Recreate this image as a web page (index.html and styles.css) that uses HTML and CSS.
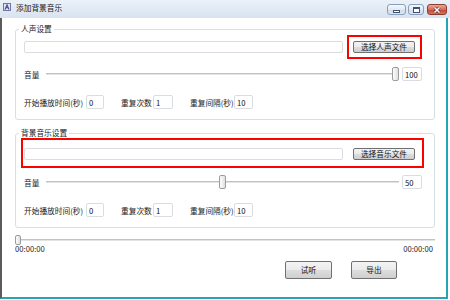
FILE: index.html
```html
<!DOCTYPE html>
<html lang="zh-CN">
<head>
    <meta charset="UTF-8">
    <title>添加背景音乐</title>
    <link rel="stylesheet" href="styles.css">
</head>
<body>
    <div class="titlebar">
        <svg class="app-icon" viewBox="0 0 8 8">
            <rect x="0.5" y="0.5" width="7" height="7" fill="#dfe4f2" stroke="#6d78a6"/>
            <path d="M2 6.5 L4 1.8 L6 6.5 M2.8 4.8 H5.2" fill="none" stroke="#5a3f8c" stroke-width="1.1"/>
        </svg>
        <span class="title">添加背景音乐</span>
        <div class="caption">
            <span class="cap min"><i></i></span>
            <span class="cap max"><i></i></span>
            <span class="cap close">
                <svg viewBox="0 0 10 8" width="10" height="8">
                    <path d="M2.5 1.5 L7.5 6.5 M7.5 1.5 L2.5 6.5" stroke="#6b2a22" stroke-width="3"/>
                    <path d="M2.5 1.5 L7.5 6.5 M7.5 1.5 L2.5 6.5" stroke="#fff" stroke-width="1.5"/>
                </svg>
            </span>
        </div>
    </div>

    <div class="frame">
        <fieldset class="group">
            <legend>人声设置</legend>
            <div class="row file">
                <input class="text path" type="text">
                <span class="mark"><button class="btn pick">选择人声文件</button></span>
            </div>
            <div class="row volume">
                <span class="vol">音量</span>
                <input class="slider" type="range" min="0" max="100" value="100">
                <input class="text val" type="text" value="100">
            </div>
            <div class="row times">
                <span class="start">开始播放时间(秒)</span><input class="text n1" type="text" value="0">
                <span class="count">重复次数</span><input class="text n2" type="text" value="1">
                <span class="gap">重复间隔(秒)</span><input class="text n3" type="text" value="10">
            </div>
        </fieldset>

        <fieldset class="group music">
            <legend>背景音乐设置</legend>
            <div class="hl">
                <div class="row file">
                    <input class="text path" type="text">
                    <button class="btn pick">选择音乐文件</button>
                </div>
            </div>
            <div class="row volume">
                <span class="vol">音量</span>
                <input class="slider" type="range" min="0" max="100" value="50">
                <input class="text val" type="text" value="50">
            </div>
            <div class="row times">
                <span class="start">开始播放时间(秒)</span><input class="text n1" type="text" value="0">
                <span class="count">重复次数</span><input class="text n2" type="text" value="1">
                <span class="gap">重复间隔(秒)</span><input class="text n3" type="text" value="10">
            </div>
        </fieldset>

        <input class="seek" type="range" min="0" max="100" value="0">
        <div class="clock"><span>00:00:00</span><span>00:00:00</span></div>
        <div class="actions">
            <button class="btn act">试听</button>
            <button class="btn act">导出</button>
        </div>
    </div>
</body>
</html>
```

FILE: styles.css
```css
* {
    box-sizing: border-box;
}
body {
    margin: 0;
    width: 450px;
    height: 300px;
    overflow: hidden;
    background: #fff;
    font-family: "Noto Sans CJK SC", "Liberation Sans", sans-serif;
    font-size: 7.7px;
    color: #1b1b1b;
}
.titlebar {
    height: 18px;
    display: flex;
    align-items: flex-start;
    background: linear-gradient(#eaf1f9, #d8e3f0);
}
.app-icon {
    width: 8px;
    height: 8px;
    margin: 3px 0 0 3px;
}
.title {
    margin: 3px 0 0 5px;
    line-height: 10px;
    color: #1a1a1a;
}
.caption {
    margin-left: auto;
    display: flex;
    padding: 4px 3px 0 0;
}
.cap {
    height: 11px;
    border: 1px solid #8a9fbb;
    border-radius: 3px;
    background: linear-gradient(#f5f8fc, #e1e9f3 50%, #d0dcea 50%, #dbe5f1);
    display: flex;
    align-items: center;
    justify-content: center;
}
.min {
    width: 19px;
}
.max {
    width: 16px;
    margin-left: 2px;
}
.close {
    width: 20px;
    margin-left: 3px;
    border-color: #8b3b30;
    background: linear-gradient(#e8a899, #d66f5d 50%, #c5432f 50%, #d2735f);
}
.min i {
    width: 7px;
    height: 3px;
    margin-top: 3px;
    border: 1px solid #3f5370;
    background: #fff;
}
.max i {
    width: 7px;
    height: 6px;
    border: 1px solid #3f5370;
    border-top-width: 2px;
    background: #fff;
}
.frame {
    width: 448px;
    height: 281px;
    border-left: 2px solid #5b5b5b;
    border-right: 2px solid #25a5b4;
    border-bottom: 2px solid #25a5b4;
    background: #fff;
    overflow: hidden;
}
.group {
    width: 420px;
    min-width: 0;
    margin: 6px 0 0 13px;
    padding: 6px 12px 10px 8px;
    border: 1px solid #d5dfe6;
    border-radius: 3px;
}
.group.music {
    margin-top: 8px;
}
.group legend {
    padding: 0 2px;
    margin-left: -5px;
    line-height: 10px;
}
.row {
    display: flex;
    align-items: center;
    height: 14px;
}
.text {
    height: 14px;
    padding: 0 2px;
    border: 1px solid #d9dce2;
    border-radius: 2px;
    background: #fff;
    font: inherit;
    color: #111;
    outline: none;
}
.path {
    flex: 1;
    min-width: 0;
    height: 12px;
}
.btn {
    padding: 0;
    border: 1px solid #707070;
    border-radius: 2px;
    background: linear-gradient(#f3f3f3, #ebebeb 48%, #dddddd 52%, #cfcfcf);
    font: inherit;
    line-height: 10px;
    color: #111;
}
.pick {
    width: 62px;
    height: 12px;
}
.mark {
    display: flex;
    margin-left: 4px;
    padding: 4px 5px 4px 4px;
    border: 2px solid #f00;
}
.hl {
    margin: -6px -2px -6px -3px;
    padding: 7px 0 5px 1px;
    border: 2px solid #f00;
}
.hl .pick {
    margin: 0 7px 0 10px;
}
.volume {
    margin-top: 13px;
}
.vol {
    width: 22px;
}
.slider, .seek {
    -webkit-appearance: none;
    appearance: none;
    margin: 0;
    padding: 0;
    background: transparent;
}
.slider {
    width: 353px;
    height: 14px;
    margin-right: 3px;
}
.slider::-webkit-slider-runnable-track, .seek::-webkit-slider-runnable-track {
    height: 2px;
    background: linear-gradient(#c2c2c2 50%, #e3e3e3 50%);
}
.slider::-webkit-slider-thumb, .seek::-webkit-slider-thumb {
    -webkit-appearance: none;
    border: 1px solid #9c9c9c;
    border-radius: 2px;
    background: linear-gradient(90deg, #fdfdfd, #e0e0e0);
}
.slider::-webkit-slider-thumb {
    width: 7px;
    height: 14px;
    margin-top: -6px;
}
.val {
    width: 20px;
}
.times {
    margin-top: 14px;
}
.start {
    width: 62px;
}
.count {
    width: 32px;
}
.gap {
    width: 44px;
}
.n1 {
    width: 18px;
    margin-right: 17px;
}
.n2 {
    width: 20px;
    margin-right: 17px;
}
.n3 {
    width: 19px;
}
.seek {
    display: block;
    width: 420px;
    height: 10px;
    margin: 7px 0 0 13px;
}
.seek::-webkit-slider-thumb {
    width: 6px;
    height: 10px;
    margin-top: -4px;
}
.clock {
    display: flex;
    justify-content: space-between;
    height: 10px;
    margin: -1px 13px 0 13px;
    line-height: 10px;
    color: #2a2a2a;
}
.actions {
    display: flex;
    justify-content: flex-end;
    gap: 19px;
    margin-top: 7px;
    padding-right: 49px;
}
.act {
    width: 47px;
    height: 18px;
}
.act + .act {
    width: 46px;
}
```
